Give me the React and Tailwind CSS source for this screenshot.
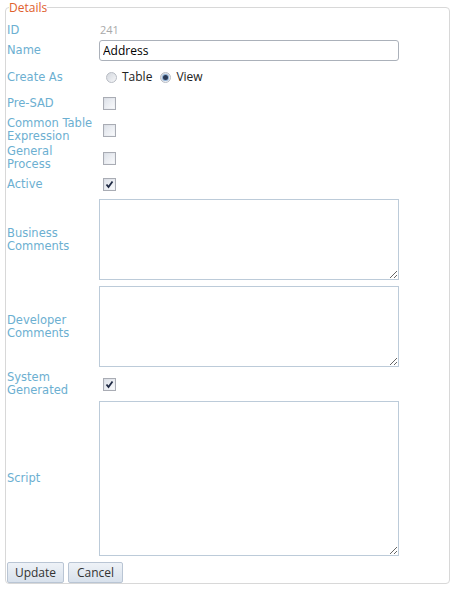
import React from 'react';

const labelCls = "w-[92px] shrink-0 pr-[2px] text-[11.5px] leading-[13px] text-[#6cafd1] [font-family:'DejaVu_Sans',Verdana,sans-serif]";
const uiFont = "[font-family:'Open_Sans','Noto_Sans',sans-serif]";

const Check = ({ checked }) => (
  <span className="ml-[4px] flex h-[13px] w-[13px] items-center justify-center border border-[#a9acb4] bg-gradient-to-br from-[#d9dde4] to-[#f4f6f9]">
    <span className="flex h-[9px] w-[9px] items-center justify-center bg-gradient-to-br from-[#dfe3ea] to-[#f8f9fb]">
      {checked && (
        <svg width="9" height="9" viewBox="0 0 9 9">
          <path d="M1.5 4.5 L3.5 7 L7.5 1.5" stroke="#1f2a44" strokeWidth="1.8" fill="none" />
        </svg>
      )}
    </span>
  </span>
);

const Radio = ({ checked }) => (
  <span className="flex h-[11px] w-[11px] items-center justify-center rounded-full border border-[#b8bcc4] bg-gradient-to-br from-[#d4d8de] to-[#f5f6f8]">
    {checked && <span className="h-[5px] w-[5px] rounded-full bg-[#2b3a55] ring-1 ring-[#8fb1d6]" />}
  </span>
);

const Row = ({ label, className, children }) => (
  <div className={`flex items-center ${className}`}>
    <div className={labelCls}>{label}</div>
    {children}
  </div>
);

const Area = ({ h }) => (
  <textarea className={`${h} w-[300px] resize border border-[#bccbd9] bg-white outline-none`} />
);

export default function App() {
  return (
    <div className="h-[592px] w-[457px] bg-white">
      <fieldset className="ml-[5px] w-[445px] rounded-[4px] border border-[#d8d8d8] pl-[1px]">
        <legend className={`ml-[2px] px-0 text-[12px] leading-[15px] text-[#e0602d] ${uiFont}`}>
          Details
        </legend>

        <Row label="ID" className="mt-[7px] h-[17px]">
          <span className={`ml-[1px] text-[11px] text-[#a9a9a9] ${uiFont}`}>241</span>
        </Row>

        <Row label="Name" className="h-[22px]">
          <input
            defaultValue="Address"
            className={`h-[21px] w-[300px] rounded-[3px] border border-[#abb1ba] px-[3px] text-[12px] text-black outline-none ${uiFont}`}
          />
        </Row>

        <Row label="Create As" className="mt-[5px] h-[22px]">
          <div className={`ml-[7px] flex items-center text-[12px] text-[#222] ${uiFont}`}>
            <Radio />
            <span className="ml-[5px]">Table</span>
            <span className="ml-[8px]"><Radio checked /></span>
            <span className="ml-[5px]">View</span>
          </div>
        </Row>

        <Row label="Pre-SAD" className="mt-[4px] h-[22px]">
          <Check />
        </Row>

        <Row label="Common Table Expression" className="mt-[3px] h-[26px]">
          <Check />
        </Row>

        <Row label="General Process" className="mt-[2px] h-[26px]">
          <Check />
        </Row>

        <Row label="Active" className="mt-[3px] h-[20px]">
          <Check checked />
        </Row>

        <Row label="Business Comments" className="mt-[5px]">
          <Area h="h-[81px]" />
        </Row>

        <Row label="Developer Comments" className="mt-[6px]">
          <Area h="h-[81px]" />
        </Row>

        <Row label="System Generated" className="mt-[4px] h-[26px]">
          <Check checked />
        </Row>

        <Row label="Script" className="mt-[4px]">
          <Area h="h-[155px]" />
        </Row>

        <div className={`mt-[6px] flex gap-[4px] text-[12px] text-[#333] ${uiFont}`}>
          <button className="h-[21px] w-[57px] rounded-[2px] border border-[#b9c5d4] bg-gradient-to-b from-[#eef2f7] to-[#d8e1ec]">
            Update
          </button>
          <button className="h-[21px] w-[55px] rounded-[2px] border border-[#b9c5d4] bg-gradient-to-b from-[#eef2f7] to-[#d8e1ec]">
            Cancel
          </button>
        </div>
      </fieldset>
    </div>
  );
}
